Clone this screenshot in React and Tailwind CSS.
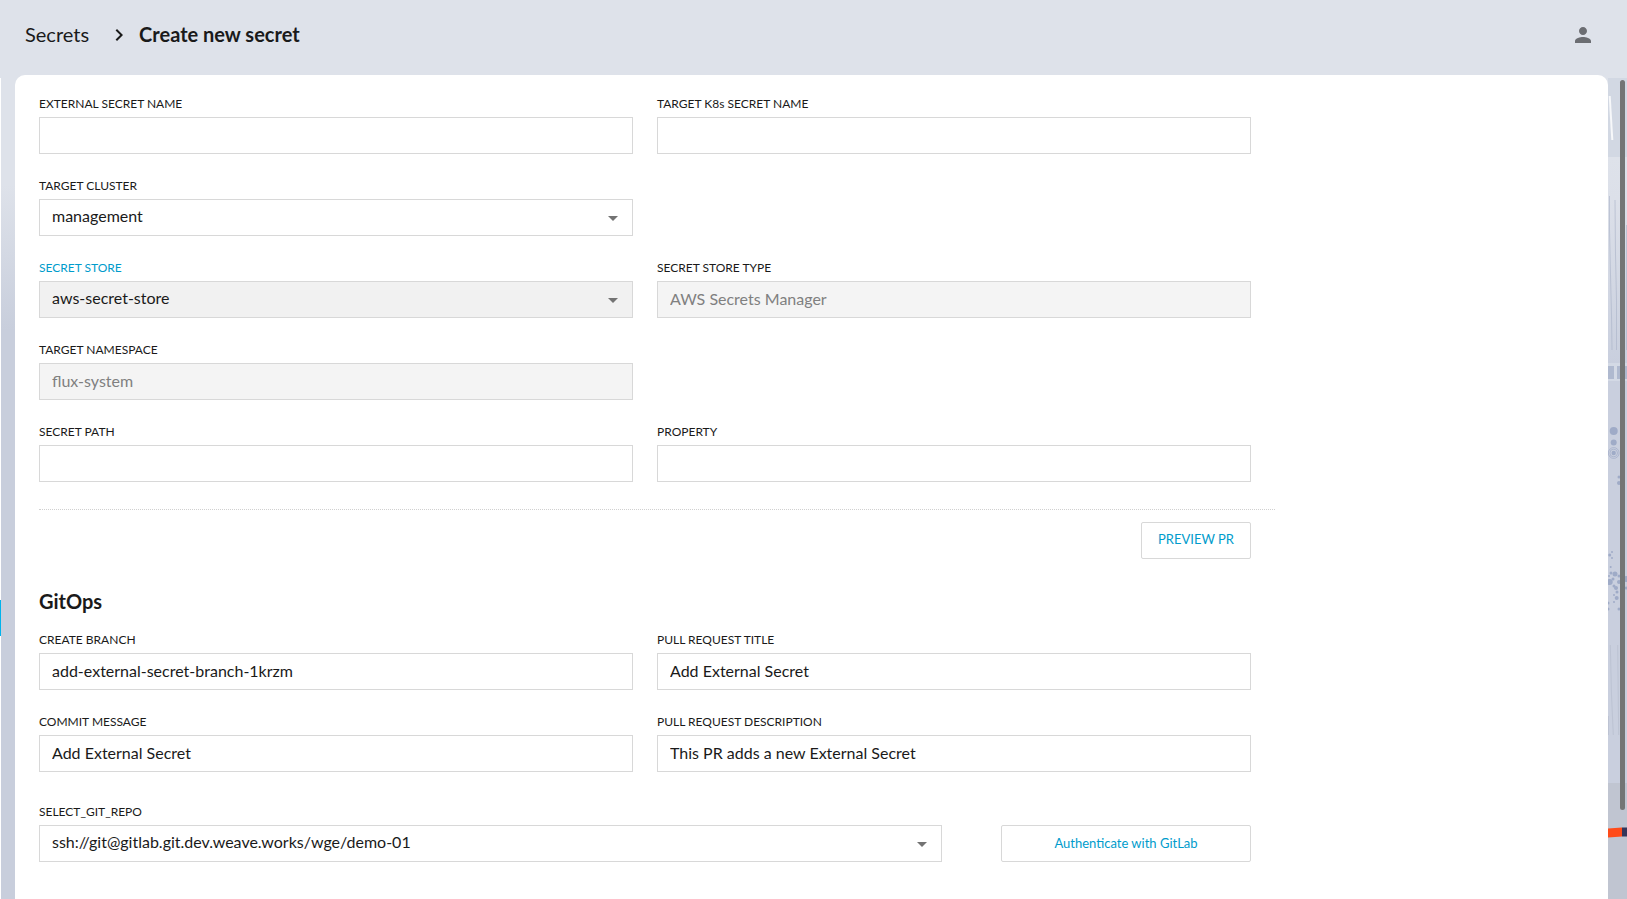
import React, { useState } from 'react';
import { MdArrowDropDown, MdChevronRight, MdPerson } from 'react-icons/md';

const DOTS = [
  [4, 477, 1], [1.7, 480, 1.5], [4, 483, 1], [2.7, 492, 1], [1, 501, 1],
  [3, 498, 1.5], [7, 499, 2.5], [11, 501, 1.5], [1.7, 507, 3], [5, 504, 1.5],
  [11, 507, 2], [6, 511, 1.5], [8, 513, 2], [9, 517, 1.5], [8.7, 523, 2],
  [6, 520, 1], [6, 527, 1], [0, 528, 1.5], [0, 534, 1.5], [18, 504, 3],
  [18, 513, 1.5], [11, 534, 1.5], [11, 402, 1.5], [11, 408, 2],
];

const REPOS = ['ssh://git@gitlab.git.dev.weave.works/wge/demo-01'];

function Label({ id, active, children }) {
  return (
    <label
      htmlFor={id}
      className={`block text-xs leading-4 mb-[5px] ${active ? 'text-[#009ccc]' : 'text-[#1a1a1a]'}`}
    >
      {children}
    </label>
  );
}

function TextField({ id, label, value, onChange, disabled }) {
  return (
    <div className="pr-6 mb-6">
      <Label id={id}>{label}</Label>
      <input
        id={id}
        type="text"
        value={value}
        onChange={onChange}
        disabled={disabled}
        className="block w-full h-[37px] px-3 pb-0.5 text-base text-[#1a1a1a] bg-white border border-[#d8d8d8] outline-none disabled:bg-[#f4f4f4] disabled:text-[#808080]"
      />
    </div>
  );
}

function SelectField({ id, label, options, active, className }) {
  return (
    <div className={className}>
      <Label id={id} active={active}>{label}</Label>
      <div className="relative">
        <select
          id={id}
          className={`block w-full h-[37px] pl-3 pr-8 pb-1 appearance-none text-base text-[#1a1a1a] border border-[#d8d8d8] outline-none ${active ? 'bg-[#f1f1f1]' : 'bg-white'}`}
        >
          {options.map((o) => (
            <option key={o}>{o}</option>
          ))}
        </select>
        <MdArrowDropDown
          size={24}
          className="absolute right-2 top-[7px] text-[#737373] pointer-events-none"
          aria-hidden="true"
        />
      </div>
    </div>
  );
}

// Sliver of the background illustration beside the card
function Backdrop() {
  return (
    <svg width="19" height="100%" className="absolute inset-0 overflow-hidden" aria-hidden="true">
      <defs>
        <linearGradient id="sky" x1="0" y1="0" x2="0" y2="1">
          <stop offset="0" stopColor="#dee2ea" />
          <stop offset="0.2" stopColor="#dce0e9" />
          <stop offset="1" stopColor="#c9cfde" />
        </linearGradient>
      </defs>
      <rect y="3" width="19" height="79" fill="#d2d8e3" />
      <path d="M1.7 21 L4.3 65" stroke="#f7f8fa" strokeWidth="2" />
      <rect y="82" width="19" height="207" fill="url(#sky)" />
      <rect y="289" width="19" height="419" fill="#c9cfde" />

      <g stroke="#aab3c8" fill="none" opacity="0.6">
        <path d="M1.5 121 V155 L2.5 200 L3.5 240 L4 275" />
        <path d="M7 125 L7.5 180 L8.5 225 V275" />
        <path d="M18.5 150 V275" />
      </g>

      <rect y="288" width="19" height="18" fill="#d3d9e5" />
      <rect y="291" width="6" height="13" fill="#afb9cf" />
      <rect x="9" y="291" width="10" height="13" fill="#afb9cf" />

      <g fill="#9fabc7">
        <circle cx="5.7" cy="356" r="4" />
        <circle cx="5.7" cy="367.5" r="3" />
        <circle cx="5.7" cy="378" r="2.2" />
        <circle cx="5.7" cy="378" r="3.8" fill="none" stroke="#9fabc7" strokeWidth="0.7" />
        <circle cx="5.7" cy="378" r="5.4" fill="none" stroke="#9fabc7" strokeWidth="0.7" />
        {DOTS.map(([x, y, r]) => (
          <circle key={`${x}-${y}`} cx={x} cy={y} r={r} />
        ))}
      </g>

      <g stroke="#b8bfcf" fill="none" opacity="0.7">
        <path d="M2.3 570 L3.5 620 L5.3 660" />
        <path d="M9.7 570 L10.7 660" />
        <path d="M0.5 641 V660" />
      </g>

      <rect y="708" width="19" height="100%" fill="#c0c5d1" />
      <path d="M0 753.5 L14 752.5 V761.5 L0 762.5 Z" fill="#ff4b19" />
      <rect x="14" y="752.5" width="5" height="9" fill="#35365a" />
    </svg>
  );
}

export default function App() {
  const [form, setForm] = useState({
    name: '',
    k8sName: '',
    path: '',
    property: '',
    branch: 'add-external-secret-branch-1krzm',
    title: 'Add External Secret',
    commit: 'Add External Secret',
    description: 'This PR adds a new External Secret',
  });

  const bind = (key) => ({
    id: key,
    value: form[key],
    onChange: (e) => setForm({ ...form, [key]: e.target.value }),
  });

  return (
    <div className="min-h-screen flex flex-col font-['Lato',sans-serif] text-[#1a1a1a] bg-[linear-gradient(to_bottom,#dee2ea_0px,#dee2ea_185px,#c8cedc_330px,#c8cedc_100%)]">
      {/* Header */}
      <header className="h-[75px] pl-[25px] pr-8 pb-[5px] flex items-center justify-between">
        <nav className="flex items-center text-xl" aria-label="Breadcrumb">
          <a href="#secrets" className="pb-0.5">Secrets</a>
          <MdChevronRight size={24} className="ml-[18px] mr-2" aria-hidden="true" />
          <span className="pb-0.5 font-bold">Create new secret</span>
        </nav>
        <button type="button" aria-label="Account" className="text-[#6b6d72]">
          <MdPerson size={24} />
        </button>
      </header>

      <div className="flex-1 flex">
        {/* Edge of the collapsed side nav */}
        <div className="w-px mt-[3px] mr-3.5 bg-white">
          <div className="mt-[522px] h-9 bg-[#00b3ec]" />
        </div>

        <main className="flex-1 min-w-0 bg-white rounded-t-[10px] px-6 pt-[21px] pb-6">
          <form className="w-4/5" onSubmit={(e) => e.preventDefault()}>
            <div className="grid grid-cols-2">
              <TextField label="EXTERNAL SECRET NAME" {...bind('name')} />
              <TextField label="TARGET K8s SECRET NAME" {...bind('k8sName')} />
              <SelectField
                id="cluster"
                label="TARGET CLUSTER"
                options={['management']}
                className="pr-6 mb-6"
              />
              <SelectField
                id="store"
                label="SECRET STORE"
                options={['aws-secret-store']}
                className="col-start-1 pr-6 mb-6"
                active
              />
              <TextField id="storeType" label="SECRET STORE TYPE" value="AWS Secrets Manager" disabled />
              <TextField id="namespace" label="TARGET NAMESPACE" value="flux-system" disabled />
              <div className="col-start-1">
                <TextField label="SECRET PATH" {...bind('path')} />
              </div>
              <TextField label="PROPERTY" {...bind('property')} />
            </div>

            <div className="mt-[3px] pt-3 pr-6 flex justify-end border-t border-dotted border-[#d0d0d0]">
              <button
                type="button"
                className="h-[37px] w-[110px] pb-0.5 text-[13px] text-[#009ccc] border border-[#d8d8d8] rounded-xs"
              >
                PREVIEW PR
              </button>
            </div>

            {/* GitOps */}
            <h2 className="mt-7 mb-[17px] text-xl leading-7 font-bold">GitOps</h2>
            <div className="grid grid-cols-2">
              <TextField label="CREATE BRANCH" {...bind('branch')} />
              <TextField label="PULL REQUEST TITLE" {...bind('title')} />
              <TextField label="COMMIT MESSAGE" {...bind('commit')} />
              <TextField label="PULL REQUEST DESCRIPTION" {...bind('description')} />
            </div>

            <div className="mt-2 pr-6 flex items-end justify-between gap-[59px]">
              <SelectField id="repo" label="SELECT_GIT_REPO" options={REPOS} className="flex-1" />
              <button
                type="button"
                className="h-[37px] w-[250px] text-[13px] text-[#009ccc] border border-[#d8d8d8] rounded-xs"
              >
                Authenticate with GitLab
              </button>
            </div>
          </form>
        </main>

        <div className="relative w-[19px] overflow-hidden">
          <Backdrop />
          <div className="absolute left-3 top-[5px] bottom-[89px] w-[5px] rounded-full bg-[#737575]" />
        </div>
      </div>
    </div>
  );
}
